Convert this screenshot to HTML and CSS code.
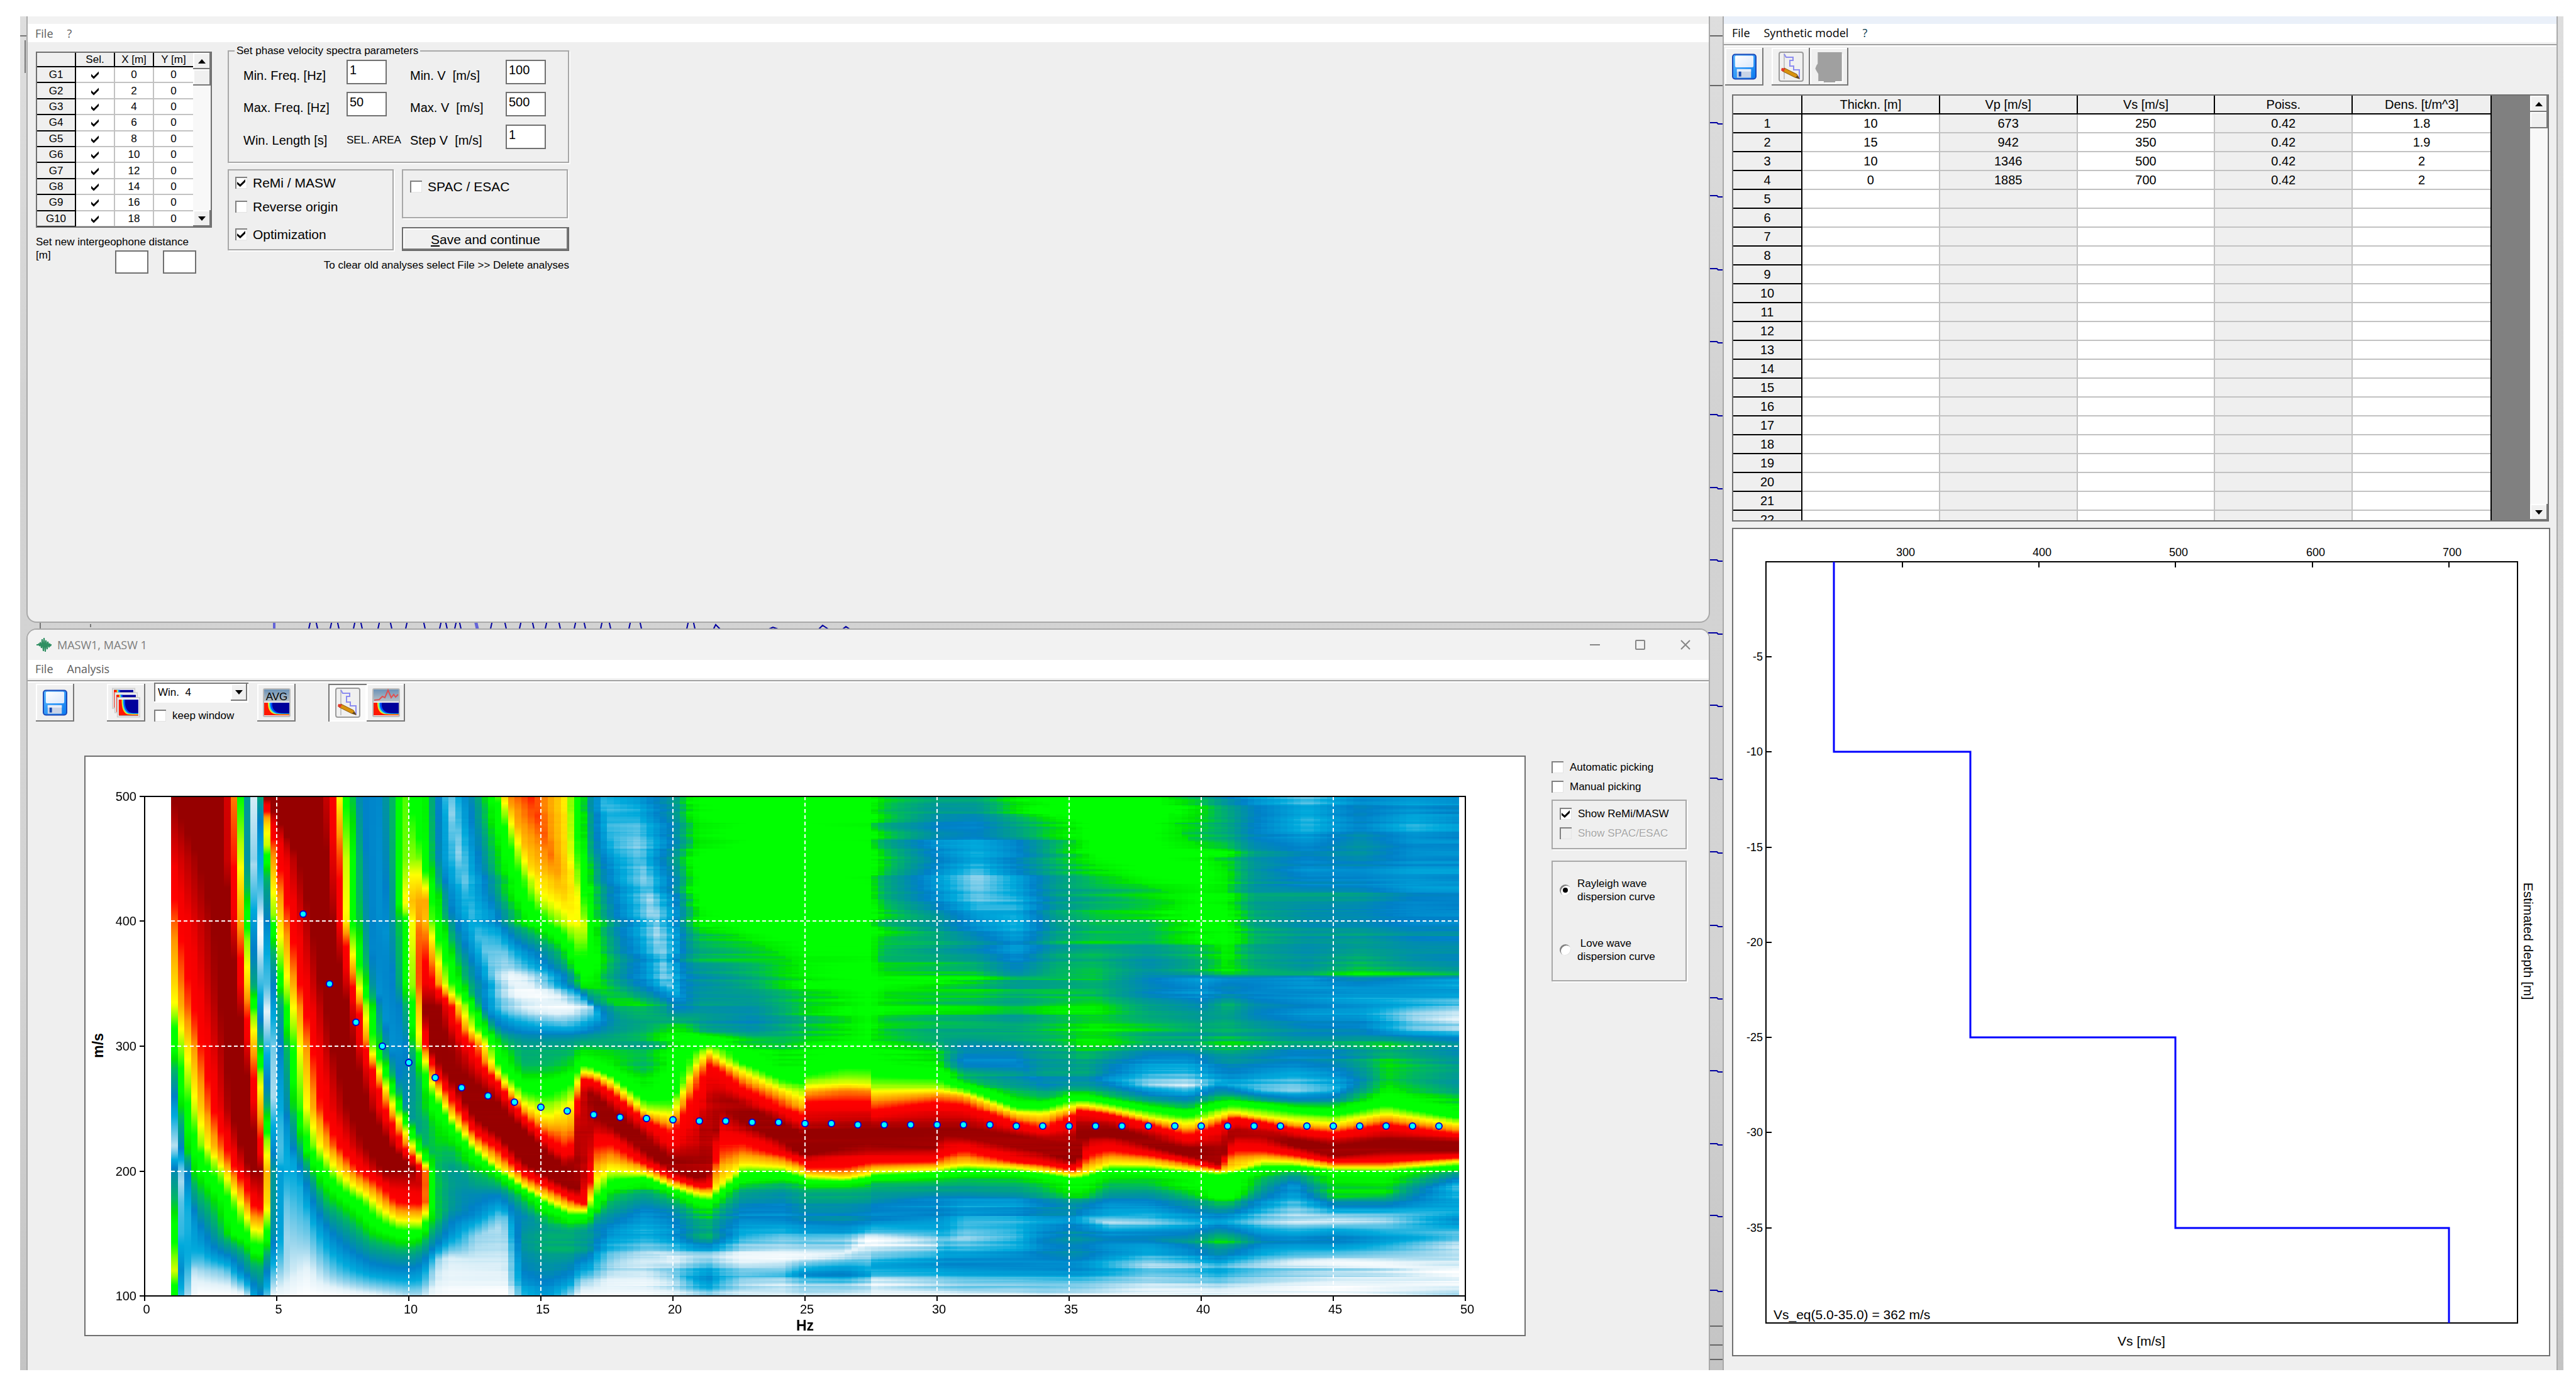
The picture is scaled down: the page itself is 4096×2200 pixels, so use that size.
FILE: index.html
```html
<!DOCTYPE html>
<html lang="en">
<head>
<meta charset="utf-8">
<title>MASW1, MASW 1</title>
<link rel="stylesheet" href="styles.css">
</head>
<body>
<svg class="defs" aria-hidden="true">
  <defs>
    <linearGradient id="blue" x1="0" y1="0" x2="1" y2="1"><stop offset="0" stop-color="#59b8ff"/><stop offset="1" stop-color="#0a7af0"/></linearGradient>
    <linearGradient id="pane" x1="0" y1="0" x2="1" y2="1"><stop offset="0" stop-color="#fff"/><stop offset="1" stop-color="#dbe8fb"/></linearGradient>
    <linearGradient id="sky" x1="0" y1="0" x2="0" y2="1"><stop offset="0" stop-color="#6c93b8"/><stop offset="1" stop-color="#b9c1c6"/></linearGradient>
    <symbol id="floppy" viewBox="0 0 40 42">
      <rect x="1" y="1" width="38" height="40" rx="4" fill="url(#blue)" stroke="#1a49b8" stroke-width="2"/>
      <rect x="5" y="3" width="30" height="19" rx="2" fill="url(#pane)"/>
      <path d="M8 25h23v14H8z" fill="#c9d3e6"/><path d="M8 25h23v4H8z" fill="#e9eef8"/>
      <path d="M11 29h4v8h-4z" fill="#1347b0"/>
    </symbol>
    <symbol id="thumb" viewBox="0 0 40 32" preserveAspectRatio="none">
      <rect width="40" height="32" fill="#00009c"/>
      <path d="M0 0h13c-1 12 2 21 9 25 5 2 10 2 18 2v5H0z" fill="#0050ff"/>
      <path d="M0 0h10c-1 14 3 23 10 27 5 1 12 1 20 1v4H0z" fill="#30e0d0"/>
      <path d="M0 0h8c-1 15 3 24 10 28 5 1 14 1 22 1v3H0z" fill="#f4f020"/>
      <path d="M0 0h6c0 16 3 26 11 29 5 1 15 1 23 1v2H0z" fill="#ff1800"/>
    </symbol>
    <symbol id="stack" viewBox="0 0 46 48">
      <rect x="1" y="1" width="36" height="32" fill="#fff" stroke="#d0d0d0" stroke-width="2"/>
      <use href="#thumb" x="3" y="3" width="32" height="29"/>
      <rect x="5" y="8" width="36" height="32" fill="#fff" stroke="#d0d0d0" stroke-width="2"/>
      <use href="#thumb" x="7" y="11" width="32" height="28"/>
      <rect x="9" y="16" width="36" height="31" fill="#fff" stroke="#d0d0d0" stroke-width="2"/>
      <use href="#thumb" x="11" y="19" width="32" height="26"/>
    </symbol>
    <symbol id="avg" viewBox="0 0 44 46">
      <rect x="1" y="1" width="42" height="44" rx="2" fill="#eee" stroke="#bbb" stroke-width="2"/>
      <rect x="2" y="2" width="40" height="19" fill="url(#sky)"/>
      <use href="#thumb" x="2" y="23" width="40" height="20"/>
    </symbol>
    <symbol id="pencil" viewBox="0 0 40 48">
      <rect x="1" y="1" width="38" height="46" rx="3" fill="#f0f0f0" stroke="#9a9a9a" stroke-width="2"/>
      <path d="M9 3v41" stroke="#c4c4c4" stroke-width="2"/>
      <path d="M9 4l3 5h11v5h-5v9h6v6h9v14" fill="none" stroke="#8c8cf0" stroke-width="2"/>
      <path d="M9 26l20 10 4 7-7-2L6 31z" fill="#d8920e" stroke="#8a5a10"/>
      <path d="M5 26l6 1-3 5-4-2z" fill="#e23a2c"/>
      <path d="M30 38l4 6-7-3z" fill="#5c4524"/>
    </symbol>
    <symbol id="up" viewBox="0 0 12 7"><path d="M0 7l6-7 6 7z"/></symbol>
    <symbol id="down" viewBox="0 0 12 7"><path d="M0 0l6 7 6-7z"/></symbol>
    <symbol id="tick" viewBox="0 0 14 14"><path d="M1 6l4 4 8-8v4l-8 8-4-4z"/></symbol>
  </defs>
</svg>

<main class="desktop">
  <svg class="traces" id="traces" aria-hidden="true"></svg>

  <div class="left">
    <section class="window" aria-label="Analysis parameters">
      <div class="cap"></div>
      <nav class="menu dim"><button>File</button><button>?</button></nav>
      <form class="setup">
        <div class="geophones">
          <div class="grid small">
            <div class="clip">
              <table id="geo">
                <thead><tr><th></th><th>Sel.</th><th>X [m]</th><th>Y [m]</th></tr></thead>
                <tbody></tbody>
              </table>
            </div>
            <div class="scroll">
              <button type="button" aria-label="Up"><svg><use href="#up"/></svg></button>
              <span class="knob"></span><span class="track"></span>
              <button type="button" aria-label="Down"><svg><use href="#down"/></svg></button>
            </div>
          </div>
          <div class="spacing">
            <label for="dx">Set new intergeophone distance [m]</label>
            <div class="pair"><input id="dx" type="text"><input type="text" aria-label="Second distance"></div>
          </div>
        </div>
        <div class="options">
          <fieldset class="params">
            <legend>Set phase velocity spectra parameters</legend>
            <label for="minf">Min. Freq. [Hz]</label><input id="minf" type="text" value="1">
            <label for="minv">Min. V&nbsp; [m/s]</label><input id="minv" type="text" value="100">
            <label for="maxf">Max. Freq. [Hz]</label><input id="maxf" type="text" value="50">
            <label for="maxv">Max. V&nbsp; [m/s]</label><input id="maxv" type="text" value="500">
            <span>Win. Length [s]</span><span class="area">SEL. AREA</span>
            <label for="stepv">Step V&nbsp; [m/s]</label><input id="stepv" type="text" value="1">
          </fieldset>
          <div class="methods">
            <div class="box list">
              <label class="check"><input type="checkbox" checked>ReMi / MASW</label>
              <label class="check"><input type="checkbox">Reverse origin</label>
              <label class="check last"><input type="checkbox" checked>Optimization</label>
            </div>
            <div class="side">
              <div class="box spac"><label class="check"><input type="checkbox">SPAC / ESAC</label></div>
              <button type="button" class="save"><u>S</u>ave and continue</button>
            </div>
          </div>
          <p class="note">To clear old analyses select File &gt;&gt; Delete analyses</p>
        </div>
      </form>
    </section>

    <section class="window" aria-label="MASW1, MASW 1">
      <header class="title">
        <svg class="logo" viewBox="0 0 24 24"><path d="M0 12h3l1-2 1 4 1-6 2 9 1-14 2 19 1-21 2 22 1-18 2 14 1-12 2 9 1-6 1 4 1-2h1" fill="none" stroke="#2f8f62" stroke-width="2" stroke-linejoin="bevel"/></svg>
        <span>MASW1, MASW 1</span>
        <div class="controls">
          <button aria-label="Minimize"><svg viewBox="0 0 16 16"><path d="M0 8h16"/></svg></button>
          <button aria-label="Maximize"><svg viewBox="0 0 16 16"><rect x="1" y="1" width="14" height="14" rx="1"/></svg></button>
          <button aria-label="Close"><svg viewBox="0 0 16 16"><path d="M1 1l14 14M15 1L1 15"/></svg></button>
        </div>
      </header>
      <nav class="menu dim ruled"><button>File</button><button>Analysis</button></nav>
      <div class="tools">
        <button class="tool" aria-label="Save"><svg class="i-floppy"><use href="#floppy"/></svg></button>
        <div class="run">
          <button class="tool" aria-label="All windows"><svg class="i-stack"><use href="#stack"/></svg></button>
          <div class="windowpick">
            <div class="combo"><select aria-label="Window"><option>Win.&nbsp; 4</option></select><span><svg><use href="#down"/></svg></span></div>
            <label class="check tight"><input type="checkbox">keep window</label>
          </div>
          <button class="tool" aria-label="Average"><svg class="i-avg" viewBox="0 0 44 46"><use href="#avg"/><text x="22" y="19" text-anchor="middle" font-size="17">AVG</text></svg></button>
        </div>
        <div class="views">
          <button class="tool pressed" aria-label="Model"><svg class="i-pencil"><use href="#pencil"/></svg></button>
          <button class="tool" aria-label="Spectrum"><svg class="i-avg" viewBox="0 0 44 46"><use href="#avg"/><path d="M3 19l8-1 5-5 4 2 5-12 5 12 4-5 3 4 4-4" fill="none" stroke="#e05050" stroke-width="2"/></svg></button>
        </div>
      </div>
      <div class="work">
        <figure class="panel">
          <svg viewBox="0 0 2288 919" class="chart">
            <foreignObject x="136" y="63" width="2048" height="794"><canvas id="heat" width="195" height="400"></canvas></foreignObject>
            <g transform="translate(94 63)">
              <g class="dash" id="dash"></g>
              <path class="axis" d="M0 0H2100V794H0zM-8 0H0M-8 198H0M-8 397H0M-8 596H0M-8 794H0M0 794v8M210 794v8M420 794v8M630 794v8M840 794v8M1050 794v8M1260 794v8M1470 794v8M1680 794v8M1890 794v8M2100 794v8"/>
              <g id="dots" class="dots"></g>
              <g class="lab end">
                <text x="-13" y="7">500</text><text x="-13" y="205">400</text><text x="-13" y="404">300</text><text x="-13" y="603">200</text><text x="-13" y="801">100</text>
              </g>
              <g class="lab mid">
                <text x="3" y="822">0</text><text x="213" y="822">5</text><text x="423" y="822">10</text><text x="633" y="822">15</text><text x="843" y="822">20</text><text x="1053" y="822">25</text><text x="1263" y="822">30</text><text x="1473" y="822">35</text><text x="1683" y="822">40</text><text x="1893" y="822">45</text><text x="2103" y="822">50</text>
              </g>
              <text class="unit" x="1050" y="849">Hz</text>
              <text class="unit" transform="translate(-66 396) rotate(-90)">m/s</text>
            </g>
          </svg>
        </figure>
        <div class="picking">
          <label class="check tight"><input type="checkbox">Automatic picking</label>
          <label class="check tight"><input type="checkbox">Manual picking</label>
          <div class="box shows">
            <label class="check tight"><input type="checkbox" checked>Show ReMi/MASW</label>
            <label class="check tight off"><input type="checkbox" disabled>Show SPAC/ESAC</label>
          </div>
          <div class="box waves">
            <label class="check tight"><input type="radio" name="wave" checked><span>Rayleigh wave<br>dispersion curve</span></label>
            <label class="check tight"><input type="radio" name="wave"><span>&nbsp;Love wave<br>dispersion curve</span></label>
          </div>
        </div>
      </div>
    </section>
  </div>

  <section class="window model" aria-label="Synthetic model">
    <div class="cap active"></div>
    <nav class="menu ruled"><button>File</button><button>Synthetic model</button><button class="help">?</button></nav>
    <div class="tools">
      <button class="tool" aria-label="Save"><svg class="i-floppy"><use href="#floppy"/></svg></button>
      <div class="views">
        <button class="tool" aria-label="Edit model"><svg class="i-pencil"><use href="#pencil"/></svg></button>
        <button class="tool" aria-label="Run" disabled><svg class="i-stack" viewBox="0 0 46 50"><path d="M6 4h40v47H35v2H16v-2H6z" fill="#fff"/><path d="M4 1h40v48H33v2H14v-2H5V37l-3-5-2-4 2-5 2-3z" fill="#a0a0a0"/></svg></button>
      </div>
    </div>
    <div class="grid large">
      <div class="clip">
        <table id="layers">
          <colgroup><col class="idx"><col><col><col><col><col></colgroup>
          <thead><tr><th></th><th>Thickn. [m]</th><th>Vp [m/s]</th><th>Vs [m/s]</th><th>Poiss.</th><th>Dens. [t/m^3]</th></tr></thead>
          <tbody></tbody>
        </table>
      </div>
      <div class="void"></div>
      <div class="scroll">
        <button type="button" aria-label="Up"><svg><use href="#up"/></svg></button>
        <span class="knob"></span><span class="track"></span>
        <button type="button" aria-label="Down"><svg><use href="#down"/></svg></button>
      </div>
    </div>
    <figure class="panel profile">
      <svg viewBox="0 0 1297 1313" class="chart">
        <g transform="translate(52 52)">
          <path class="axis" d="M0 0H1195V1210H0zM217 0v9M434 0v9M651 0v9M869 0v9M1086 0v9M0 151h9M0 302h9M0 454h9M0 605h9M0 756h9M0 907h9M0 1059h9"/>
          <path class="vs" d="M108 0V302H325V756H651V1059H1086V1210"/>
          <g class="lab small mid"><text x="222" y="-9">300</text><text x="439" y="-9">400</text><text x="656" y="-9">500</text><text x="874" y="-9">600</text><text x="1091" y="-9">700</text></g>
          <g class="lab small end"><text x="-5" y="157">-5</text><text x="-5" y="308">-10</text><text x="-5" y="460">-15</text><text x="-5" y="611">-20</text><text x="-5" y="762">-25</text><text x="-5" y="913">-30</text><text x="-5" y="1065">-35</text></g>
          <text class="lab big" x="12" y="1204">Vs_eq(5.0-35.0) = 362 m/s</text>
          <text class="lab mid big" x="597" y="1246">Vs [m/s]</text>
          <text class="lab mid big" transform="translate(1205 603) rotate(90)">Estimated depth [m]</text>
        </g>
      </svg>
    </figure>
  </section>
</main>
<script src="app.js"></script>
</body>
</html>
```
FILE: styles.css
```css
* { box-sizing: border-box; }
body {
  margin: 0; min-height: 100vh; display: flex;
  padding: 26px 20px 22px 32px;
  background: #fff; color: #000;
  font: 17px/21px "Liberation Sans", Arial, sans-serif;
}
button, input, select { font: inherit; color: inherit; margin: 0; padding: 0; border-radius: 0; }
button { border: 0; background: none; }
.defs { position: absolute; width: 0; height: 0; }

.desktop {
  position: relative; flex: 1; display: grid;
  grid-template-columns: minmax(0, 2673fr) minmax(0, 1324fr);
  gap: 24px; padding: 0 11px 0 12px; overflow: hidden;
  background: linear-gradient(#dedede, #d2d2d2 30%, #d4d4d4 70%, #c4c4c4);
}
.traces { position: absolute; inset: 0; width: 100%; height: 100%; }
.left { position: relative; display: grid; grid-template-rows: 962fr 1177fr; gap: 13px; }
.window {
  position: relative; background: #efefef;
  border-radius: 0 0 14px 14px; box-shadow: 0 0 0 2px #a9a9a9;
  overflow: hidden;
}
.window + .window { border-radius: 14px 14px 0 0; }
.cap { height: 12px; background: #f2f2f2; }
.cap.active { background: #eaf0f9; }

.menu { display: flex; gap: 22px; height: 29px; padding-left: 12px; background: #fff; font: 18px/28px "Open Sans", "Noto Sans", sans-serif; }
.model .menu { padding-left: 13px; }
.dim { color: #5c5c5c; }
.ruled { height: 34px; padding-bottom: 4px; border-bottom: 2px solid #a0a0a0; box-shadow: inset 0 -3px #f2f2f2, 0 2px #fff; position: relative; }
.help { color: #0a3c50; }

.title { display: flex; align-items: center; height: 48px; padding-left: 14px; background: #f2f2f2; color: #7c7c7c; font: 18px/24px "Open Sans", "Noto Sans", sans-serif; }
.logo { width: 24px; height: 24px; margin-right: 9px; }
.controls { display: flex; gap: 56px; margin-left: auto; padding-right: 29px; }
.controls svg { display: block; width: 16px; height: 16px; fill: none; stroke: #858585; stroke-width: 2; }

/* raised and sunken surfaces */
.tool, .save, .scroll button, .knob, .combo span {
  background: #f0f0f0;
  box-shadow: inset -2px -2px #787878, inset 2px 2px #fff;
}
.tool { display: grid; place-items: center; flex: none; width: 61px; height: 60px; }
.tool.pressed { background: #f9f9f9; box-shadow: inset 2px 2px #787878, inset -2px -2px #fff; }
.tools { display: flex; gap: 52px; padding: 4px 0 0 13px; height: 118px; }
.model .tools { gap: 13px; padding-left: 2px; height: 78px; }
.views, .run { display: flex; }
.run { gap: 14px; }
.i-floppy { width: 39px; height: 42px; }
.i-stack { width: 45px; height: 48px; overflow: visible; }
.i-avg { width: 44px; height: 46px; overflow: visible; }
.i-pencil { width: 40px; height: 48px; }

.combo { display: flex; width: 150px; height: 30px; margin-bottom: 12px; background: #fff; box-shadow: inset 2px 2px #787878, 0 2px #fff; position: relative; }
.combo select { appearance: none; border: 0; background: none; width: 100%; padding-left: 6px; }
.combo span { position: absolute; right: 2px; top: 2px; width: 26px; height: 27px; display: grid; place-items: center; pointer-events: none; }
.combo svg, .scroll svg { width: 12px; height: 7px; display: block; }
.windowpick { margin-top: -2px; }

/* tick boxes and radios */
.check { display: flex; align-items: center; gap: 9px; font-size: 21px; height: 21px; white-space: nowrap; }
.check input { appearance: none; flex: none; width: 19px; height: 19px; background: #fff; box-shadow: inset 2px 2px #808080, inset -1px -1px #e4e4e4; display: grid; place-items: center; }
.check input:checked::after { content: ""; width: 13px; height: 13px; background: #000; clip-path: polygon(0 38%, 38% 70%, 100% 8%, 100% 40%, 38% 100%, 0 68%); }
.check input[type=radio] { width: 18px; height: 18px; border-radius: 50%; }
.check input[type=radio]:checked::after { width: 8px; height: 8px; border-radius: 50%; clip-path: none; }
.check input:disabled { background: #efefef; }
.tight { font-size: 17px; gap: 10px; }
.off { color: #a6a6a6; text-shadow: 1px 1px #fff; }
.box, .params { border: 2px solid #a8a8a8; box-shadow: 2px 2px #fcfcfc; }

/* parameters window */
.setup { display: flex; gap: 25px; padding: 4px 0 0 13px; }
.geophones { width: 280px; padding-top: 11px; }
.grid { display: flex; border: 2px solid #707070; background: #fff; }
.grid table { border-collapse: separate; border-spacing: 0; table-layout: fixed; width: 100%; }
.grid th, .grid td { padding: 0; text-align: center; font-weight: 400; overflow: hidden; white-space: nowrap; }
.grid td { border: 0 solid #c2c2c2; border-width: 0 2px 2px 0; }
.grid th { background: #efefef; border: 0 solid #000; border-width: 0 2px 2px 0; }
.clip { flex: 1; min-width: 0; overflow: hidden; }
.small { height: 280px; }
.small table { height: 277px; }
.small tr > :last-child { border-right: 0; }
.small tbody th { border-right-width: 2px; }
.small td svg { width: 14px; height: 15px; display: block; margin: 0 auto; }
.scroll { display: flex; flex-direction: column; flex: none; width: 28px; background: #f8f8f8; }
.scroll button, .knob { flex: none; height: 26px; display: grid; place-items: center; }
.track { flex: 1; }
.spacing { padding-top: 12px; }
.spacing label { display: block; width: 250px; }
.pair { display: flex; gap: 23px; margin: -18px 0 0 126px; }
input[type=text] { width: 64px; height: 39px; border: 2px solid #707070; background: #fff; padding: 0 2px 6px 3px; font-size: 20px; }
.pair input[type=text] { width: 53px; height: 37px; }

.options { width: 543px; }
.params {
  margin: 0; padding: 4px 33px 20px 23px; min-width: 0; font-size: 20px; height: 188px;
  display: grid; grid-template-columns: 164px 101px 152px 64px; row-gap: 12px;
}
.params legend { font-size: 17px; line-height: 20px; margin-left: -14px; padding: 0 3px; }
.params label, .params span { padding-top: 15px; height: 39px; }
.params .area { font-size: 17px; padding-top: 14px; }
.methods { display: grid; grid-template-columns: 264px 266px; gap: 13px; margin-top: 10px; }
.list { height: 129px; padding: 9px 10px; display: flex; flex-direction: column; gap: 17px; }
.last { margin-top: 6px; }
.side { display: flex; flex-direction: column; gap: 14px; }
.spac { height: 78px; padding: 15px 11px; margin-right: 2px; }
.save { height: 38px; font-size: 21px; border: 2px solid #6c6c6c; }
.note { margin: 12px 0 0; text-align: right; white-space: nowrap; }

/* spectrum window */
.work { display: flex; gap: 41px; padding: 0 35px 0 90px; }
.panel { margin: 0; flex: 1; min-width: 0; border: 2px solid #707070; background: #fff; }
.chart { display: block; width: 100%; height: auto; font-family: "Liberation Sans", Arial, sans-serif; }
#heat { display: block; width: 2048px; height: 794px; image-rendering: pixelated; }
.axis { fill: none; stroke: #000; stroke-width: 2; }
.dash { stroke: #fff; stroke-width: 2; stroke-dasharray: 6 4; }
.dots { fill: #0ff; stroke: #0000d8; stroke-width: 2; }
.lab { font-size: 20px; }
.lab.small { font-size: 18px; }
.lab.big { font-size: 21px; }
.end { text-anchor: end; }
.mid { text-anchor: middle; }
.unit { font-size: 23px; font-weight: 700; text-anchor: middle; }
.vs { fill: none; stroke: #00f; stroke-width: 3; }
.picking { width: 215px; flex: none; display: flex; flex-direction: column; gap: 10px; padding-top: 8px; }
.shows { height: 79px; padding: 10px 11px; display: flex; flex-direction: column; gap: 10px; }
.waves { height: 192px; margin-top: 8px; padding: 23px 11px; display: flex; flex-direction: column; gap: 52px; }
.waves .check { height: 43px; }

/* model window */
.model { display: flex; flex-direction: column; border-radius: 0; }
.large { height: 679px; margin: 0 12px 10px 13px; font-size: 20px; background: #808080; }
.large .clip { height: 675px; border-right: 2px solid #000; }
.large table { background: #fff; }
.large tr { height: 30px; }
.idx { width: 110px; }
.large td:nth-child(odd) { background: #efefef; }
.large tr > :last-child { border-right: 0; }
.void { width: 61px; }
.profile { flex: none; margin: 0 10px 0 13px; }
```
FILE: app.js
```js
const NS = 'http://www.w3.org/2000/svg';
function add(parent, name, attrs) {
  const el = document.createElementNS(NS, name);
  for (const k in attrs) el.setAttribute(k, attrs[k]);
  parent.appendChild(el);
  return el;
}

/* tables */
const tick = '<svg><use href="#tick"/></svg>';
document.querySelector('#geo tbody').innerHTML = Array.from({ length: 10 }, (_, i) =>
  `<tr><th>G${i + 1}</th><td>${tick}</td><td>${i * 2}</td><td>0</td></tr>`).join('');
const layers = [[10, 673, 250, 0.42, 1.8], [15, 942, 350, 0.42, 1.9], [10, 1346, 500, 0.42, 2], [0, 1885, 700, 0.42, 2]];
document.querySelector('#layers tbody').innerHTML = Array.from({ length: 22 }, (_, i) =>
  `<tr><th>${i + 1}</th>${(layers[i] || ['', '', '', '', '']).map(c => `<td>${c}</td>`).join('')}</tr>`).join('');

/* seismic traces behind the windows */
const tr = document.getElementById('traces');
for (const y of [169, 285, 401, 517, 633, 749, 864, 980, 1095, 1211, 1328, 1445, 1560, 1676, 1792, 1906, 2025])
  add(tr, 'path', { d: `M2684 ${y}h14l2 2h12`, stroke: '#0000a0', 'stroke-width': 2, fill: 'none' });
for (const y of [31, 110, 2082, 2112, 2135])
  add(tr, 'path', { d: `M2684 ${y}h28`, stroke: '#666', 'stroke-width': 2 });
add(tr, 'path', { d: 'M0 31h14M8 38v52M32 960v20M112 966v5', stroke: '#777', 'stroke-width': 2 });
add(tr, 'path', { d: 'M404 960v18', stroke: '#6464d8', 'stroke-width': 4 });
add(tr, 'path', { d: 'M724 960l4 18', stroke: '#6464d8', 'stroke-width': 5 });
for (const [a, b] of [[462, 470], [496, 504], [533, 541], [572, 588], [616, 641], [670, 676], [694, 698], [751, 770], [797, 814], [838, 856], [884, 896], [926, 936], [971, 985], [1063, 1070]])
  add(tr, 'path', { d: `M${a - 4} 978L${a} 960M${b} 960L${b + 4} 978`, stroke: '#0000a0', 'stroke-width': 2 });
add(tr, 'path', { d: 'M1102 975l4-8 8 8M1142 974h8M1191 974l6-3 8 3M1270 974l6-6 9 6M1308 974l5-4 6 4', stroke: '#0000a0', 'stroke-width': 2, fill: 'none' });
const label = add(tr, 'text', { x: 37, y: 985, fill: '#555', 'font-size': 17 });
label.textContent = 'TR02';

/* dispersion points and grid */
const v = [406, 350, 319, 300, 287, 275, 267, 260, 255, 251, 248, 245, 243, 242, 241, 240, 240, 239, 239, 238, 238, 237, 237, 237, 237, 237, 237];
for (let f = 6; f < 50; f++)
  add(document.getElementById('dots'), 'circle', { cx: f * 42, cy: Math.round((500 - (v[f - 6] || 236)) * 1.985), r: 5 });
const dash = document.getElementById('dash');
for (let f = 5; f < 50; f += 5) add(dash, 'path', { d: `M${f * 42} 0V794` });
for (const y of [198, 397, 596]) add(dash, 'path', { d: `M42 ${y}H2090` });

/* spectrum: digitised samples; x = 175 + 54.08 f, y = 134 + 3.1325 (500 - v), level 0..10 */
const rows = [
  [134, '230:10 230:10 230:10 230:10 230:10 230:10 337:10 352:9 368:6.5 386:3.5 397:.3 411:4 415:6 418:9 422:10 538:10 562:9 574:7 592:5.5 618:3 655:2.8 690:5 708:6.3 715:6.1 725:5.6 735:5.5 742:5.5 752:5.2 775:3 797:1 835:2.8 865:4.5 895:6 920:8 965:8.6 1030:7.3 1065:5.5 1090:3 1112:1.5 1180:2 1260:3.5 1320:5.5'],
  [291, '230:9.3 230:9.3 231:9.3 235:9.4 245:9.5 285:10 337:10 355:9 372:6.7 385:3.5 397:1 418:2.5 428:7 450:9 490:10 548:10 570:9 585:7 600:5.5 630:3 660:2.6 685:4.5 708:6.4 718:6.5 735:6.5 742:6 750:5.5 765:4.5 785:2.5 820:1.1 858:3 885:4.5 930:6 960:7.5 1010:8.2 1040:7.3 1070:5.7 1110:3 1140:2 1190:1.2 1240:3 1310:5.2'],
  [395, '230:8.6 230:8.6 232:8.7 237:8.8 245:9.2 305:10 347:10 360:9 379:6.6 390:3.5 405:.2 422:2.8 436:6.6 467:9 507:10 556:10 575:9 587:7 603:5.5 633:3 663:2.5 688:4.3 702:6.8 728:7.8 750:7.8 757:7 764:5.8 778:5 802:2.8 837:1.6 879:2.7 915:4.5 953:5.7 990:6.8 1035:7.3 1062:7 1080:5.7 1130:3.2 1160:2.3 1210:1 1255:2.7 1310:4.8'],
  [447, '230:8 230:8 232:8 238:8.5 245:9 315:10 350:10 362:9 382:6.5 392:3.5 410:0 425:3 440:6.5 475:9 515:10 560:10 578:9 588:7 605:5.5 635:3 665:2.5 690:4.2 715:6.3 735:8 748:7.8 755:7 768:5.8 785:5 810:3 845:1.8 890:2.5 930:4.5 965:5.5 1010:6.3 1050:7 1070:7 1085:5.7 1140:3.3 1170:2.5 1220:1 1262:2.5 1310:4.5'],
  [604, '230:7 230:7 235:7.3 250:8.2 270:9 325:10 362:10 375:9 390:6.5 402:3 418:.7 438:3 455:6 495:9 535:10 580:10 598:9 612:7 625:5.5 650:2.6 685:3 705:5 728:7 742:9.3 758:9.3 770:8.5 790:6.8 815:5.5 865:3 900:1 930:.2 960:.3 1000:1.2 1040:3 1070:5.3 1100:5.2 1130:4.5 1180:3.3 1200:3 1245:1.5 1270:2.8 1330:4'],
  [660, '230:6.5 230:6.5 237:7 253:8 280:9 330:10 368:10 380:9 396:6.5 408:3 424:.5 444:3 465:6 505:9 545:10 590:10 610:9 624:7 638:5.5 662:2.6 696:3 715:5 733:7 748:10 775:10 800:9 822:7 850:5.5 870:2.8 905:1.2 950:.5 1000:.2 1040:.1 1085:.8 1100:3 1140:4.5 1190:4.8 1240:4 1262:3 1290:2.8 1310:3 1330:3.3'],
  [710, '230:5.5 230:5.5 238:6.3 255:7.5 287:9 335:10 373:10 385:9 400:6.5 413:3 428:.4 448:3 471:6 512:9 551:10 595:10 617:9 630:7 644:5.5 671:2.6 702:2.9 720:5 735:7 752:10 785:10 815:9 840:7 867:5.5 900:3 940:2.3 990:1.8 1040:1.5 1070:2 1110:3 1140:3.6 1160:3.8 1190:4 1220:4.4 1250:4.7 1280:5 1310:5.3 1330:5.5'],
  [760, '230:5 230:5 240:6 258:7 295:9 340:10 378:10 390:9 405:6.5 418:3 432:.4 452:3 478:6 520:9 558:10 600:10 625:9 635:7 650:5.5 680:2.6 708:2.8 725:5 738:7 758:10 800:10 832:9 862:7 885:5.5 940:4 980:3.8 1020:4.2 1060:4.5 1090:4.6 1120:4.4 1160:4.4 1200:4.7 1220:5 1240:5.3 1262:5.5 1290:6 1330:6.8 1370:5.5'],
  [917, '230:1.5 232:1.6 250:5 275:6.7 318:9 350:10 392:10 403:9 420:6.5 428:3.5 440:1 460:2.7 490:6 540:9 590:10 635:10 665:9 685:7 700:5.5 712:3.5 735:4.3 760:5.3 785:7 810:9'],
  [1010, '230:1.2 236:.8 258:4.8 295:6.7 345:9 372:10 402:10 412:9 426:6.5 433:3.5 447:1.3 472:2.5 505:5.7 575:9 625:10 678:10 702:9 722:7 735:5.5 752:4.5 775:4.6 800:4.8 830:6 850:7'],
  [1074, '230:4.5 248:1 275:5 335:6.8 365:9 392:10 412:10 420:9 428:7 436:4 455:2 485:2 520:5 620:9 665:10 730:10 745:9 758:7 768:5.5 800:4.3'],
  [1152, '230:6 252:.8 280:4 340:5.5 370:7 395:9 412:9.3 420:8 428:7 436:4 460:1.3 500:1.8 545:4.5 620:6 690:8.8 745:9 755:7.5 762:6 775:5 800:4'],
  [1230, '230:7.5 250:1.5 300:3 355:5.5 385:6 400:6.8 415:6.8 422:6.3 428:5.5 438:3.5 465:1 510:1.3 560:3 640:5 700:5.7 735:5.7 750:5 760:4.5 775:4 800:3'],
  [1324, '230:8.6 250:2.5 275:.8 340:1.3 375:3 395:4 412:4.2 420:3.7 430:2.5 442:1.3 470:.7 510:.4 570:1.5 640:2.5 690:2.8 720:2.8 740:2.6 755:1.7 775:.8 800:.6'],
  [1387, '230:7 250:1.5 280:0 350:0 380:.2 397:2 410:3 420:2 428:1 440:.3 470:.2 500:0 560:0 640:.3 690:.6 720:.8 740:.8 755:.4 775:.2 800:.1']
];
const fx = f => 175 + 54.08 * f;
const cols = [
  [770, '740:10 745:10 750:10 755:10 760:10 770:10 790:10 825:9 865:7 905:5.5 1050:4.6 1200:4.8 1260:3 1300:.9 1387:.2'],
  [800, '740:10 745:10 750:10 755:10 760:10 800:10 840:10 885:9 935:7 965:5.5 1060:4 1160:3.9 1230:2.6 1290:.6 1387:.1'],
  [850, '740:8.3 745:8.3 760:8.8 780:9 800:9.3 850:10 940:10 975:9 1010:7 1040:5.5 1130:3.5 1190:2.6 1240:.9 1300:.6 1387:.1'],
  [900, '740:5 760:5.2 800:5.7 830:7 855:9 905:10 985:10 1015:9 1065:7 1085:5.5 1140:3 1180:1.5 1215:.8 1300:.6 1387:.1'],
  [915, '740:4.6 770:4.9 820:5.7 855:7 885:9 928:10 1005:10 1035:9 1077:7 1097:5.5 1152:3 1195:1.3 1240:.8 1315:.6 1387:.1'],
  [950, '740:4 790:4.2 860:5.6 905:7 940:9 970:10 1050:10 1080:9 1110:7 1125:5.5 1185:3.3 1250:3.6 1310:3.2 1350:2.5 1387:1.9'],
  [1000, '740:4 790:4.3 860:5.6 940:7 1000:9 1030:10 1090:10 1110:9 1145:7 1165:5.6 1220:4 1270:4.2 1310:3.6 1350:3 1387:2.6'],
  [1045, '740:4 780:4.4 840:5.6 900:6.8 1000:8.2 1075:10 1115:10 1140:9 1170:7 1190:5.6 1230:4 1275:4.2 1310:3.4 1350:2.4 1387:1.2'],
  [1068, '740:4.2 775:5 805:5.8 825:7 845:9 880:9.4 1120:10 1155:9 1172:7 1190:5.5 1230:3.7 1275:3.8 1310:2.5 1350:1 1387:.3'],
  [1082, '740:4.2 775:5 805:5.8 825:7 845:9 880:10 1050:9.3 1155:9 1172:7 1190:5.5 1230:3.7 1275:3.8 1310:2.5 1350:1 1387:.3'],
  [1097, '740:4.2 780:5 815:5.8 830:7 850:9 885:10 940:10 1000:9 1100:7 1170:5.5 1210:3.4 1270:2.7 1310:1.8 1350:.8 1387:.3'],
  [1130, '740:4.2 790:5 830:5.7 850:7 880:9 920:10 960:10 1000:9 1075:6.8 1110:5.6 1190:3.5 1240:2 1300:1.2 1340:.6 1387:.2'],
  [1200, '740:4.2 820:4.6 890:5.7 925:7 950:9 990:10 1025:10 1055:9 1080:7 1095:5.5 1180:2.6 1220:2 1270:1 1320:.8 1387:.1'],
  [1255, '740:5.2 800:5.5 890:5.8 935:7 975:8.6 1048:10 1072:10 1090:9 1110:7 1125:5.5 1180:3.2 1230:2.4 1290:.7 1330:1.3 1387:.2'],
  [1305, '740:5.6 770:6 800:6.8 830:8 880:9 1050:9.9 1090:10 1110:9 1130:7 1150:5.6 1195:4.2 1240:3.8 1285:1 1345:2.5 1387:.5'],
  [1330, '740:5.7 765:6.5 775:7 790:8 810:9 880:9.6 1085:9.9 1115:9 1135:7 1155:5.6 1200:4.4 1240:4.2 1285:1 1345:3 1387:.7'],
  [1352, '740:5.6 780:6.5 795:7 805:8 825:9 885:9.8 915:9.8 1000:9 1110:7 1135:5.6 1190:3.8 1240:3.2 1285:.8 1345:2.2 1387:.5'],
  [1400, '740:5 800:5.8 825:7 845:8 870:9 910:9.9 950:10 1000:9 1060:7 1085:5.6 1170:3 1220:2.2 1285:.3 1340:1.5 1387:.3'],
  [1480, '740:4.5 830:5.5 870:7 890:8 920:9 955:10 1000:10 1030:9 1065:7 1080:5.6 1160:3 1210:2.3 1285:.1 1340:1.5 1387:.2'],
  [1523, '740:4.7 830:5.5 890:7 918:8 942:9 983:10 1030:10 1052:9 1078:7 1095:5.6 1165:3.5 1220:2.4 1285:.1 1335:2.5 1387:.3'],
  [1529, '740:5 815:5.5 862:7 880:8 907:9 976:10 1030:10 1064:9 1085:7 1102:5.6 1165:3.5 1220:2.4 1285:.1 1335:2.5 1387:.3'],
  [fx(26.5), '740:5.4 800:5.5 855:7 870:8 904:9 968:10 1008:10 1062:9 1092:7 1103:5.6 1165:3.5 1210:2.8 1280:.3 1335:2.8 1387:.2'],
  [fx(27.45), '740:5.5 800:5.5 858:7 873:8 904:9 966:10 1004:10 1050:9 1080:7 1095:5.6 1165:3.3 1205:2.5 1250:.1 1335:2 1387:.2'],
  [fx(27.55), '740:5.1 810:5.5 870:6.8 895:8 925:9 966:10 1006:10 1050:9 1075:7 1088:5.6 1160:3.2 1200:2.5 1255:.1 1310:2 1387:.1'],
  [fx(29.9), '740:4.4 800:5 868:6.8 885:8 905:9 966:10 1014:10 1046:9 1070:7 1083:5.6 1140:3 1190:2.8 1260:1 1310:2.4 1387:.2'],
  [fx(30.2), '740:4 800:4.6 870:6.8 885:8 907:9 966:10 984:10 1032:9 1066:7 1081:5.6 1140:3 1190:2.8 1250:1.8 1310:2.6 1387:.2'],
  [fx(31), '740:3.7 800:2.6 876:6.6 890:8 912:9 964:10 989:10 1020:9 1058:7 1075:5.6 1140:2.8 1200:2 1240:1.3 1310:2.7 1387:.3'],
  [fx(33), '740:3.8 800:2.7 907:5.6 928:7 956:9 986:10 1014:10 1048:9 1066:7 1078:5.6 1140:2.8 1200:2.2 1240:2 1310:2.7 1387:.2'],
  [fx(34), '740:4 860:3.6 910:5.7 932:7 962:8.6 996:10 1026:10 1055:9 1073:7 1086:5.6 1130:3.8 1200:2.6 1250:3.3 1310:2.6 1387:.4'],
  [fx(35.1), '740:4.5 850:3.8 893:5.8 912:7 940:9 1006:10 1046:10 1068:9 1085:7 1096:5.6 1140:4.5 1190:2.7 1240:3.8 1300:3 1387:.3'],
  [fx(35.3), '740:4.9 850:3.8 893:5.8 908:7 922:9 962:10 1050:10 1066:9 1085:7 1096:5.6 1140:4.6 1190:2.4 1240:3.8 1300:3 1387:.3'],
  [fx(35.7), '740:5 850:3.8 893:5.8 909:7 925:9 962:10 983:10 1030:9 1077:7 1093:5.6 1140:4.4 1190:1.8 1240:3.6 1300:2.8 1387:.3'],
  [fx(36.5), '740:5 845:2.8 900:5.7 917:7 933:9 962:10 983:10 1018:9 1055:7 1074:5.6 1125:3.9 1205:1 1240:3.2 1300:2.2 1387:.3'],
  [fx(38), '740:4.3 855:1.4 915:5.6 939:7 957:9 992:10 1009:10 1031:9 1057:7 1072:5.6 1125:3.9 1205:1 1240:3.2 1300:1.4 1387:.3'],
  [fx(39.5), '740:4.4 860:1 925:5.6 956:7 989:9 1018:10 1035:10 1050:9 1068:7 1080:5.6 1130:4.8 1205:1.5 1250:3.8 1300:1.8 1387:.3'],
  [fx(40.7), '740:5 850:2.4 905:5.6 932:7 960:9 1010:9.8 1054:10 1066:9 1077:7 1087:5.6 1140:5.6 1200:2 1250:5 1300:2.5 1387:.3'],
  [fx(41.2), '740:5 860:2.4 902:5.7 926:7 940:9 968:9.8 985:9.8 1015:9 1070:7 1083:5.6 1140:5.5 1200:1.6 1250:4.7 1300:2 1387:.3'],
  [fx(42.3), '740:4.6 870:1.6 908:5.6 937:7 952:9 972:9.6 985:9.8 1020:9 1050:7 1066:5.6 1120:3.8 1200:.9 1250:3.2 1300:1.4 1387:.4'],
  [fx(43.5), '740:4 872:1.3 918:5.6 947:7 970:9 995:10 1010:10 1032:9 1052:7 1064:5.6 1108:2.5 1200:.6 1250:2.9 1300:1 1387:.4'],
  [fx(45), '740:4 870:2 925:5.5 953:7 982:9 1012:10 1036:10 1051:9 1064:7 1076:5.6 1140:4.5 1195:.5 1245:3.2 1300:.8 1387:.3'],
  [fx(47), '740:4.4 830:5 905:5.7 931:7 958:9 998:10 1022:10 1050:9 1065:7 1077:5.6 1130:4.8 1195:.8 1245:2.4 1310:.5 1387:.5'],
  [fx(49.8), '740:3.5 860:4 935:5.6 957:7 985:9 1002:10 1022:10 1038:9 1050:7 1064:5.6 1110:1.3 1195:2.5 1240:1.3 1335:.1 1387:.5']
];
for (const t of [rows, cols]) for (const r of t) r[1] = r[1].split(' ').map(p => p.split(':').map(Number));

const gf = [21, 23, 25, 27.4, 28, 30, 31.5, 33, 34.5, 36, 38, 40, 41, 42, 44, 46, 48, 49.75].map(fx);
const gy = [134, 200, 260, 320, 380, 440, 500, 560, 580, 590, 625, 660, 680, 720, 745];
const gv = [
  [5.3, 5.6, 5.6, 5.4, 4.7, 4, 4.1, 5.2, 5.6, 6, 5.6, 4.5, 3.4, 2.5, 1.8, 3, 2.6, 2.8],
  [5.3, 5.6, 5.6, 5.5, 4.6, 3.2, 2.9, 4.1, 5, 5.6, 5.6, 4.8, 4.2, 3.1, 1.8, 3, 1.8, 2.3],
  [5.3, 5.6, 5.6, 5.5, 4.6, 2.9, 2.4, 3.1, 4.6, 5.6, 5.6, 5.2, 4.8, 3.4, 2.6, 3.4, 2.6, 2.8],
  [5.5, 5.6, 5.6, 5.4, 4.5, 2.6, 1.4, 2.7, 4.2, 5.1, 5.6, 5.6, 5.2, 3.8, 2.5, 2.6, 2.2, 2.4],
  [5.6, 5.6, 5.6, 5.5, 4.4, 2.8, 1.6, 2.4, 4.2, 4.6, 5, 5.4, 5.3, 4, 3.8, 3.7, 3, 3],
  [5.3, 5.6, 5.6, 5.5, 4.6, 3.4, 2, 1.5, 3.6, 4.4, 4.7, 5.6, 5.4, 4.1, 3.5, 3.4, 2.9, 2.9],
  [4.7, 5.2, 5.6, 5.5, 4.8, 4.2, 3.4, 2.3, 4, 4.5, 4.2, 5, 5.4, 4.3, 3.7, 4, 3.4, 3.4],
  [4, 4.6, 5.3, 5.5, 4.8, 4.4, 4, 2.8, 4, 4.4, 3.6, 4.6, 5.3, 4.3, 3.5, 4.4, 3.7, 3.4],
  [3.9, 4.6, 5.3, 5.5, 4.9, 4.5, 4.4, 3, 4, 4.4, 3.6, 4.4, 5, 4.4, 4, 5, 4.8, 4.6],
  [3.8, 4.4, 5.2, 5.5, 5.3, 5.4, 5, 4, 4.1, 4.4, 3, 2.2, 2.6, 2.6, 2, 3, 2.6, 2.4],
  [3.6, 4, 5, 5.5, 5.2, 4.9, 4.8, 4.2, 4.4, 4.4, 3.3, 2.7, 3.3, 2.8, 2.4, 2, 2, 1.9],
  [3.7, 3.5, 4.7, 5.4, 5.1, 5, 4.9, 4.4, 4.9, 5, 3.8, 3.2, 4.4, 3.4, 3, 2.6, 2, 1.5],
  [3.8, 3.3, 4.6, 5.4, 5, 4.9, 4.8, 4.3, 5, 5.1, 4.2, 3.8, 4.1, 3.2, 2.5, 2.4, 1.1, .8],
  [4, 3.4, 4.6, 5.4, 4.8, 4.4, 4.4, 4.4, 4.9, 5.3, 4.6, 4, 4.2, 3.8, 3, 2.9, 1.2, .7],
  [5.2, 3.9, 4.6, 5.3, 4.9, 4.2, 4.2, 4.4, 4.6, 5, 4.6, 4, 4.5, 4.1, 4, 4, 3.4, 3]
];
const mix = (a, b, t) => a + (b - a) * t;
const ramp = (x, a, b) => Math.min(1, Math.max(0, (x - a) / (b - a)));

/* stops of two neighbouring profiles are moved as well as blended */
function morph(table, at, pos) {
  let i = 0;
  while (i < table.length - 2 && table[i + 1][0] < at) i++;
  const [p, q] = [table[i], table[i + 1]];
  const t = ramp(at, p[0], q[0]);
  const n = Math.max(p[1].length, q[1].length);
  let last = null;
  for (let k = 0; k < n; k++) {
    const a = p[1][Math.min(k, p[1].length - 1)], b = q[1][Math.min(k, q[1].length - 1)];
    const s = [mix(a[0], b[0], t), mix(a[1], b[1], t)];
    if (s[0] > pos) return last ? mix(last[1], s[1], ramp(pos, last[0], s[0])) : s[1];
    last = s;
  }
  return last[1];
}
function cell(arr, x) {
  let i = 0;
  while (i < arr.length - 2 && arr[i + 1] < x) i++;
  return [i, ramp(x, arr[i], arr[i + 1])];
}
function grid(x, y) {
  const [i, s] = cell(gf, x), [j, t] = cell(gy, y);
  return mix(mix(gv[j][i], gv[j][i + 1], s), mix(gv[j + 1][i], gv[j + 1][i + 1], s), t);
}
function field(x, y) {
  if (x < 756) return morph(rows, y, x);
  let top = 0, low = 0;
  if (y < 760) {
    if (x < 1320) top = morph(rows, y, x);
    if (x > 1265) top = mix(top, grid(x, y), ramp(x, 1265, 1320));
  }
  if (y > 720) {
    low = morph(cols, x, y);
    if (x < 780 && y >= 760) return mix(morph(rows, y, x), low, ramp(x, 756, 780));
  }
  return mix(top, low, ramp(y, 722, 758));
}
const hash = (a, b) => { const s = Math.sin(a * 127.1 + b * 311.7) * 43758.5453; return s - Math.floor(s) - 0.5; };
function streak(x, r, w, h) {
  const u = x / w, a = Math.floor(u), j = Math.floor(r / h);
  const t = (u - a) * (u - a) * (3 - 2 * (u - a));
  return mix(hash(a, j), hash(a + 1, j), t);
}
const stops = [[0, 255, 255, 255], [.5, 226, 242, 249], [1, 150, 212, 236], [2, 0, 170, 220], [3, 0, 128, 200], [4, 0, 160, 136], [4.5, 0, 184, 96], [5, 0, 226, 0], [5.4, 0, 255, 0], [6, 0, 255, 0], [6.5, 140, 255, 0], [7, 255, 255, 0], [8, 255, 150, 0], [8.8, 255, 0, 0], [9.3, 245, 0, 0], [10, 150, 0, 0]];
function colour(l) {
  let i = 0;
  while (i < stops.length - 2 && stops[i + 1][0] < l) i++;
  const t = ramp(l, stops[i][0], stops[i + 1][0]);
  return [1, 2, 3].map(k => mix(stops[i][k], stops[i + 1][k], t));
}
const ctx = document.getElementById('heat').getContext('2d');
const img = ctx.createImageData(195, 400);
for (let r = 0; r < 400; r++) for (let c = 0; c < 195; c++) {
  const f = 1.125 + c / 4, x = fx(f), y = 134 + 3.1325 * (r + .5);
  let l = field(x, y);
  const rough = ramp(f, 9, 22) * (l < 5.2 ? 1 : l < 6 ? .35 : .25);
  l += rough * (streak(x, r, 260, 2) * .5 + streak(x + 90, r, 340, 7) * .8 + streak(x, r, 150, 1) * .2);
  const rgb = colour(Math.min(10, Math.max(0, l)));
  const o = (r * 195 + c) * 4;
  img.data[o] = rgb[0]; img.data[o + 1] = rgb[1]; img.data[o + 2] = rgb[2]; img.data[o + 3] = 255;
}
ctx.putImageData(img, 0, 0);
```
